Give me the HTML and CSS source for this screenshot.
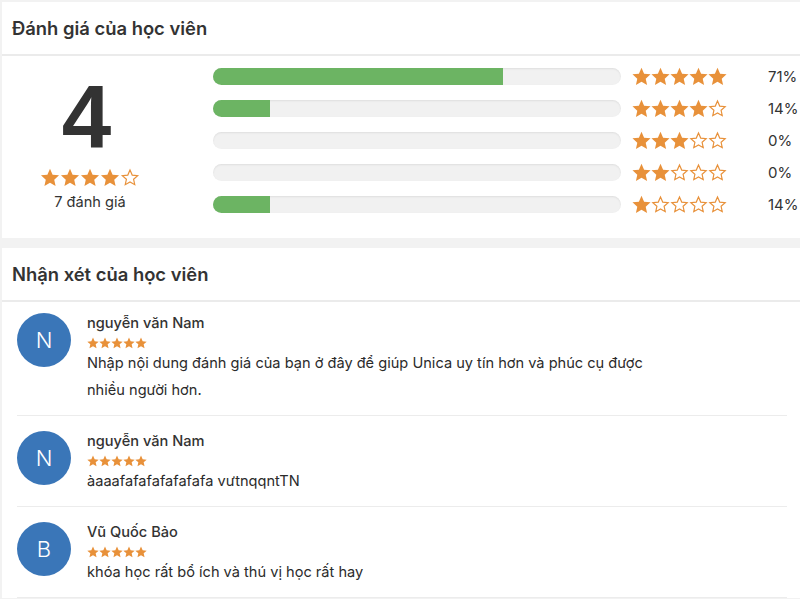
FILE: index.html
```html
<!DOCTYPE html>
<html lang="vi">
<head>
<meta charset="utf-8">
<title>Đánh giá của học viên</title>
<link rel="stylesheet" href="styles.css">
</head>
<body>
<svg width="0" height="0" class="defs" aria-hidden="true">
  <defs>
    <symbol id="sf" viewBox="0 0 24 24"><polygon points="12,1 15.29,8.47 23.41,9.29 17.33,14.73 19.05,22.71 12,18.6 4.95,22.71 6.67,14.73 0.59,9.29 8.71,8.47" fill="#e8913a"/></symbol>
    <symbol id="so" viewBox="0 0 24 24"><polygon points="12,2.6 14.8,8.95 21.7,9.65 16.53,14.27 18,21.05 12,17.55 6,21.05 7.47,14.27 2.3,9.65 9.2,8.95" fill="none" stroke="#e8913a" stroke-width="1.5"/></symbol>
  </defs>
</svg>

<section class="card">
  <h2 class="card-head">Đánh giá của học viên</h2>
  <div class="summary">
    <div class="score">
      <div class="score-num">4</div>
      <div class="stars stars-md">
        <svg><use href="#sf"/></svg><svg><use href="#sf"/></svg><svg><use href="#sf"/></svg><svg><use href="#sf"/></svg><svg><use href="#so"/></svg>
      </div>
      <div class="score-count">7 đánh giá</div>
    </div>
    <div class="dist">
      <div class="dist-row">
        <div class="bar"><div class="fill" style="width:71%"></div></div>
        <div class="stars stars-md"><svg><use href="#sf"/></svg><svg><use href="#sf"/></svg><svg><use href="#sf"/></svg><svg><use href="#sf"/></svg><svg><use href="#sf"/></svg></div>
        <div class="pct">71%</div>
      </div>
      <div class="dist-row">
        <div class="bar"><div class="fill" style="width:14%"></div></div>
        <div class="stars stars-md"><svg><use href="#sf"/></svg><svg><use href="#sf"/></svg><svg><use href="#sf"/></svg><svg><use href="#sf"/></svg><svg><use href="#so"/></svg></div>
        <div class="pct">14%</div>
      </div>
      <div class="dist-row">
        <div class="bar"><div class="fill" style="width:0%"></div></div>
        <div class="stars stars-md"><svg><use href="#sf"/></svg><svg><use href="#sf"/></svg><svg><use href="#sf"/></svg><svg><use href="#so"/></svg><svg><use href="#so"/></svg></div>
        <div class="pct">0%</div>
      </div>
      <div class="dist-row">
        <div class="bar"><div class="fill" style="width:0%"></div></div>
        <div class="stars stars-md"><svg><use href="#sf"/></svg><svg><use href="#sf"/></svg><svg><use href="#so"/></svg><svg><use href="#so"/></svg><svg><use href="#so"/></svg></div>
        <div class="pct">0%</div>
      </div>
      <div class="dist-row">
        <div class="bar"><div class="fill" style="width:14%"></div></div>
        <div class="stars stars-md"><svg><use href="#sf"/></svg><svg><use href="#so"/></svg><svg><use href="#so"/></svg><svg><use href="#so"/></svg><svg><use href="#so"/></svg></div>
        <div class="pct">14%</div>
      </div>
    </div>
  </div>
</section>

<section class="card card-reviews">
  <h2 class="card-head">Nhận xét của học viên</h2>
  <ul class="reviews">
    <li class="review">
      <div class="avatar">N</div>
      <div class="review-body">
        <div class="name">nguyễn văn Nam</div>
        <div class="stars stars-sm"><svg><use href="#sf"/></svg><svg><use href="#sf"/></svg><svg><use href="#sf"/></svg><svg><use href="#sf"/></svg><svg><use href="#sf"/></svg></div>
        <p class="comment">Nhập nội dung đánh giá của bạn ở đây để giúp Unica uy tín hơn và phúc cụ được nhiều người hơn.</p>
      </div>
    </li>
    <li class="review">
      <div class="avatar">N</div>
      <div class="review-body">
        <div class="name">nguyễn văn Nam</div>
        <div class="stars stars-sm"><svg><use href="#sf"/></svg><svg><use href="#sf"/></svg><svg><use href="#sf"/></svg><svg><use href="#sf"/></svg><svg><use href="#sf"/></svg></div>
        <p class="comment">àaaafafafafafafafa vưtnqqntTN</p>
      </div>
    </li>
    <li class="review">
      <div class="avatar">B</div>
      <div class="review-body">
        <div class="name">Vũ Quốc Bảo</div>
        <div class="stars stars-sm"><svg><use href="#sf"/></svg><svg><use href="#sf"/></svg><svg><use href="#sf"/></svg><svg><use href="#sf"/></svg><svg><use href="#sf"/></svg></div>
        <p class="comment">khóa học rất bổ ích và thú vị học rất hay</p>
      </div>
    </li>
  </ul>
</section>
</body>
</html>
```

FILE: styles.css
```css
* { box-sizing: border-box; }

html, body {
  margin: 0;
  padding: 0;
}

body {
  background: #f2f2f2;
  font-family: Inter, "Liberation Sans", Arial, sans-serif;
  color: #333;
  padding: 2px 0 0 2px;
  overflow: hidden;
}

.defs {
  position: absolute;
  width: 0;
  height: 0;
}

.card {
  background: #fff;
}

.card-reviews {
  margin-top: 10px;
}

.card-head {
  margin: 0;
  height: 54px;
  padding: 0 10px;
  display: flex;
  align-items: center;
  font-size: 18.4px;
  font-weight: 600;
  color: #333;
  border-bottom: 2px solid #ebebeb;
}

/* summary */
.summary {
  display: flex;
  height: 182px;
  padding-top: 12px;
}

.score {
  width: 176px;
  display: flex;
  flex-direction: column;
  align-items: center;
}

.score-num {
  font-family: "Liberation Sans", Arial, sans-serif;
  font-size: 89px;
  font-weight: 700;
  line-height: 1;
  margin-top: 5px;
  margin-right: 7px;
  color: #333;
}

.score .stars {
  margin-top: 6px;
}

.score-count {
  margin-top: 6px;
  font-size: 14.6px;
  color: #333;
}

.dist {
  margin-left: 35px;
  display: flex;
  flex-direction: column;
  gap: 15px;
}

.dist-row {
  display: flex;
  align-items: center;
  height: 17px;
}

.bar {
  width: 408px;
  height: 17px;
  border-radius: 9px;
  background: #f1f1f1;
  box-shadow: inset 0 1px 2px rgba(0,0,0,0.08);
  overflow: hidden;
}

.fill {
  height: 100%;
  background: #6cb463;
}

.dist-row .stars {
  margin-left: 11px;
}

.pct {
  margin-left: 41px;
  font-size: 15px;
  color: #333;
}

.stars {
  display: flex;
}

.stars-md svg {
  width: 19px;
  height: 19px;
  display: block;
}

.score .stars-md svg {
  width: 20px;
}

.stars-sm svg {
  width: 12px;
  height: 12px;
  display: block;
}

/* reviews */
.reviews {
  list-style: none;
  margin: 0;
  padding: 0 13px 0 15px;
}

.review {
  display: flex;
  padding: 15px 0 11px;
  border-bottom: 1px solid #ececec;
}

.review:first-child {
  padding-top: 11px;
}

.avatar {
  flex: none;
  width: 54px;
  height: 54px;
  border-radius: 50%;
  background: #3a76b8;
  color: #fff;
  display: flex;
  align-items: center;
  justify-content: center;
  font-size: 22px;
  font-weight: 300;
}

.review-body {
  margin-left: 16px;
  flex: 1;
}

.name {
  font-size: 14.6px;
  font-weight: 500;
  color: #333;
  line-height: 20px;
}

.review .stars {
  margin-top: 3px;
  height: 13px;
  align-items: center;
}

.comment {
  margin: 1px 0 0;
  font-size: 14.6px;
  line-height: 27px;
  color: #2b2b2b;
  max-width: 572px;
}
```
